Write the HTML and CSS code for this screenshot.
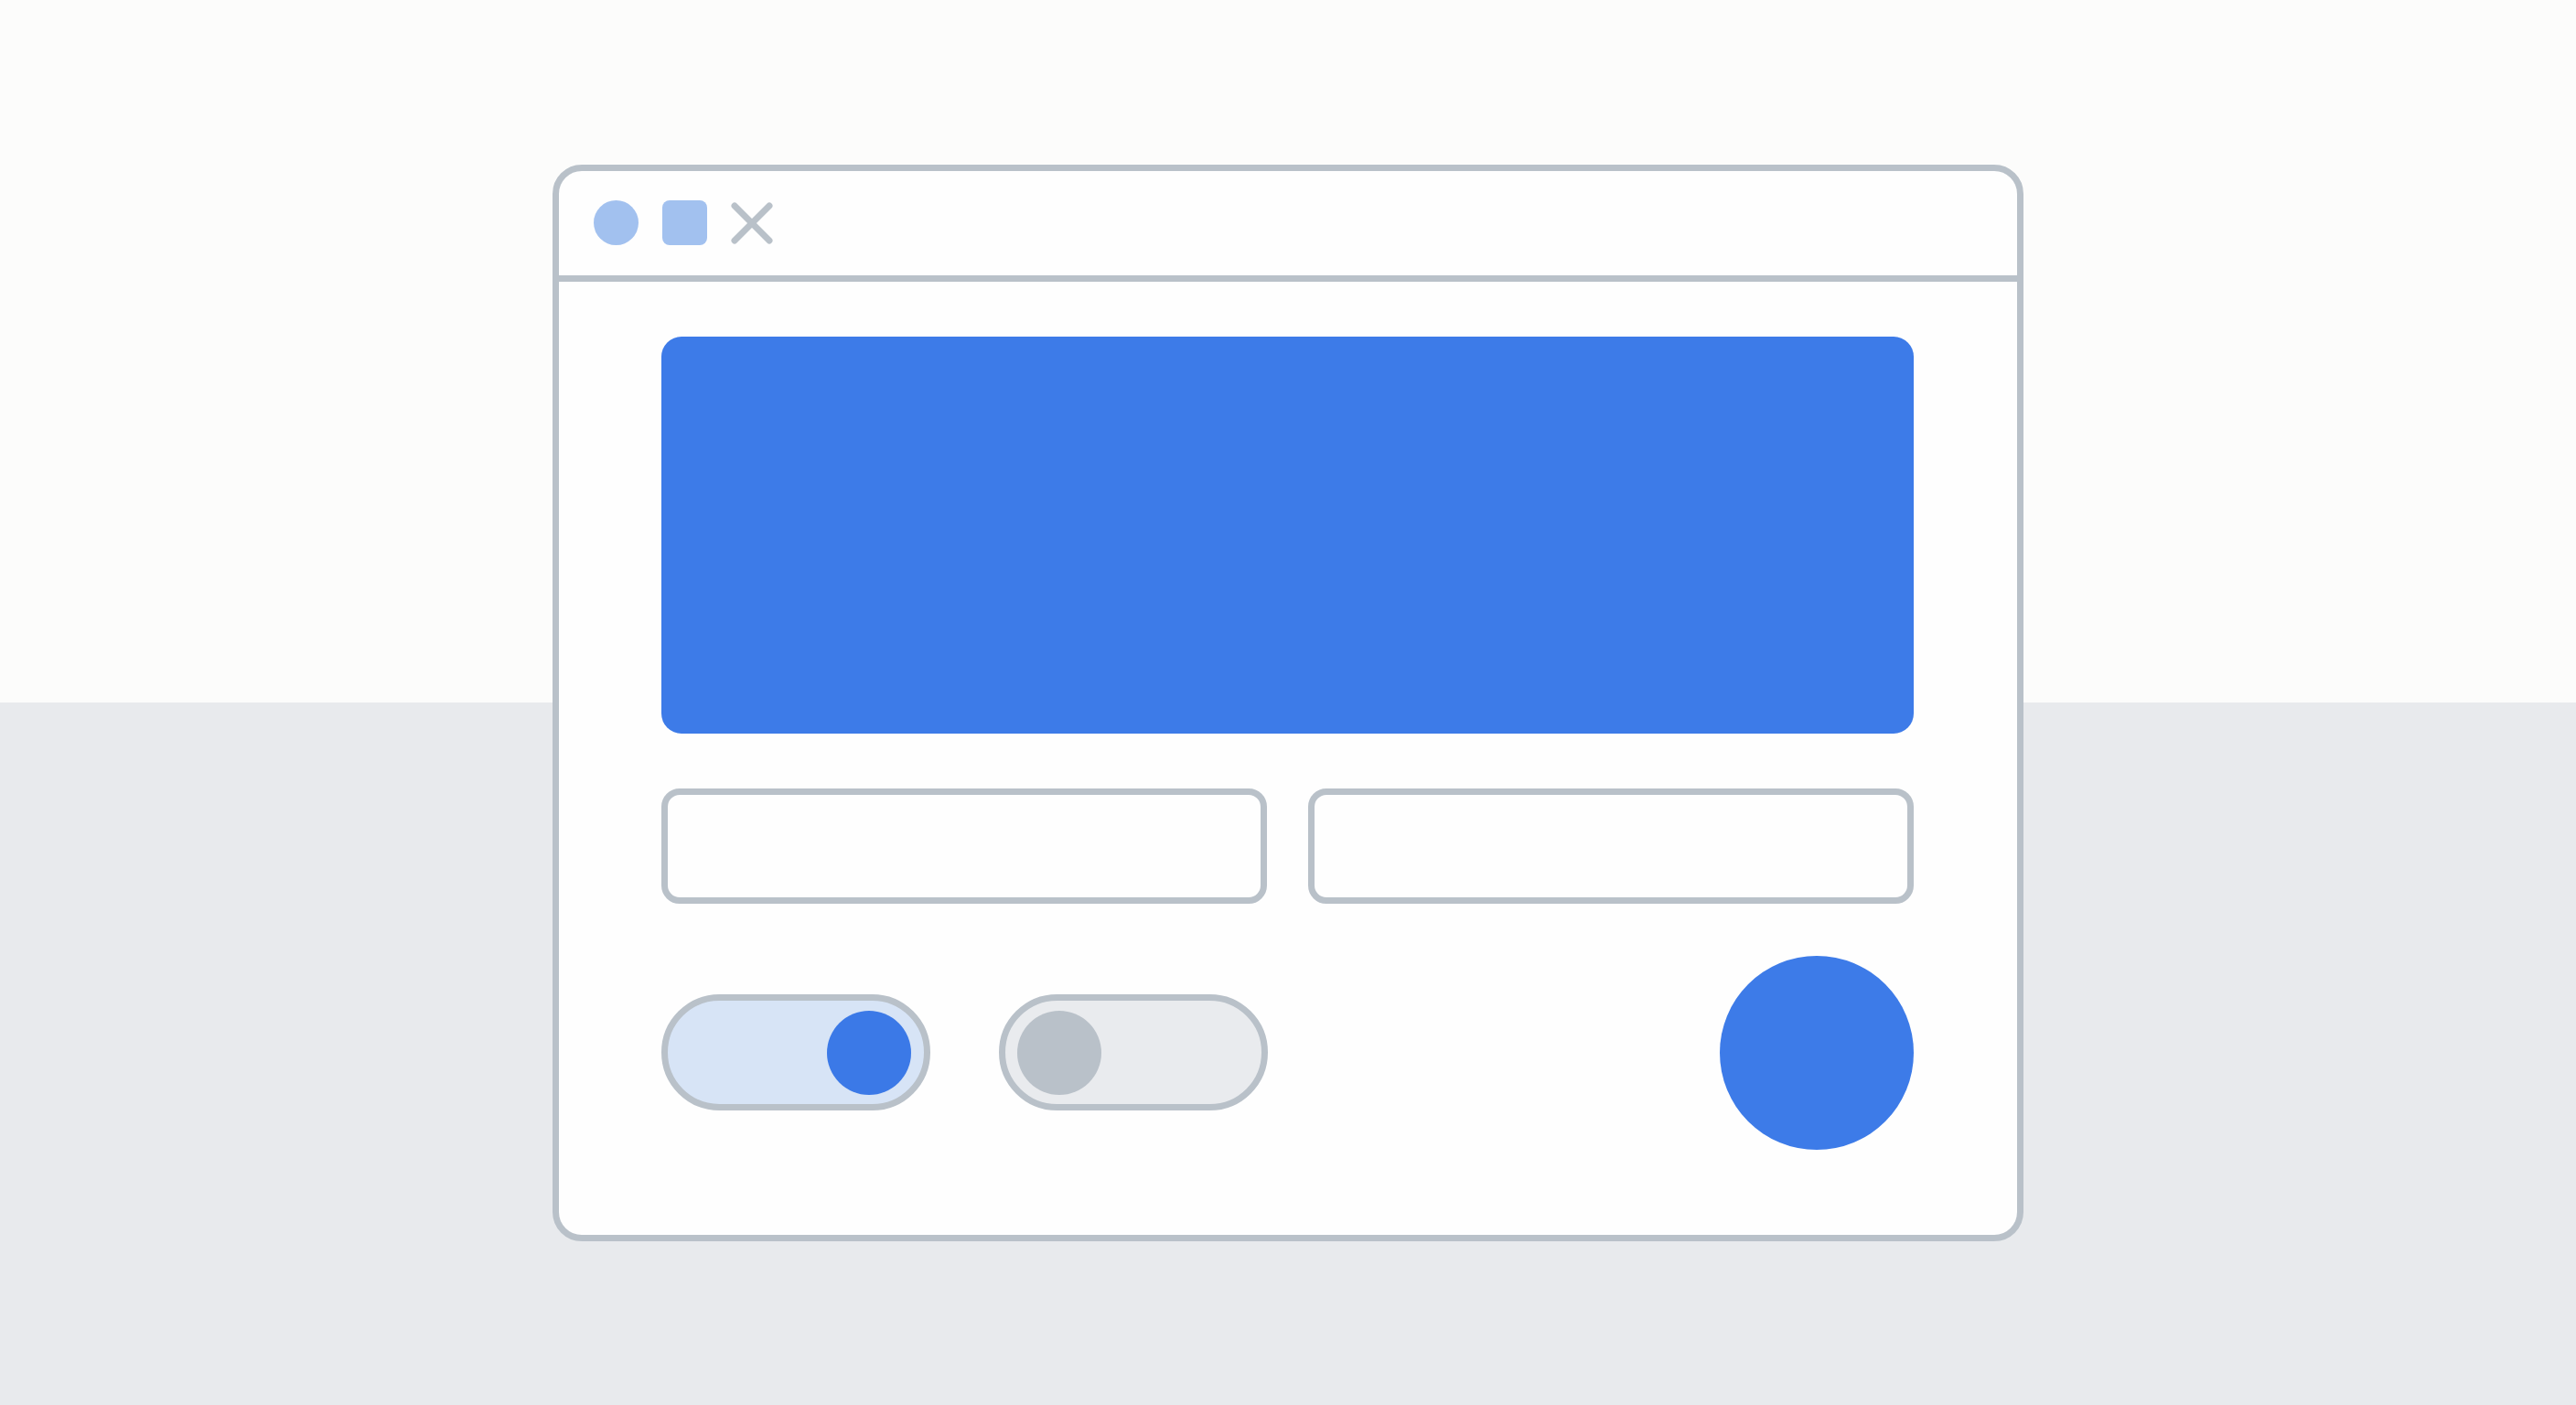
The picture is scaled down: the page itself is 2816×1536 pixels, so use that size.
FILE: index.html
```html
<!DOCTYPE html>
<html lang="en">

<head>
    <meta charset="UTF-8">
    <meta name="viewport" content="width=device-width, initial-scale=1.0">
    <title>Window Sketch</title>
    <link rel="stylesheet" href="styles.css">
</head>

<body>
    <div class="window">
        <div class="titlebar">
            <span class="dot"></span>
            <span class="square"></span>
            <svg class="close" width="46" height="46" viewBox="0 0 46 46">
                <line x1="4" y1="4" x2="42" y2="42" />
                <line x1="42" y1="4" x2="4" y2="42" />
            </svg>
        </div>

        <div class="content">
            <div class="banner"></div>

            <div class="fields">
                <div class="field"></div>
                <div class="field"></div>
            </div>

            <div class="controls">
                <div class="toggle on"><span class="knob"></span></div>
                <div class="toggle off"><span class="knob"></span></div>
                <div class="fab"></div>
            </div>
        </div>
    </div>
</body>

</html>
```

FILE: styles.css
```css
html,
body {
    height: 100%;
}

body {
    margin: 0;
    display: flex;
    align-items: center;
    justify-content: center;
    background: linear-gradient(to bottom, #fcfcfb 0, #fcfcfb 50%, #e8eaed 50%, #e8eaed 100%);
    font-family: "Liberation Sans", sans-serif;
}

.window {
    box-sizing: border-box;
    width: 1608px;
    height: 1177px;
    border: 7px solid #b9c1c9;
    border-radius: 32px;
    background: #fefefe;
    overflow: hidden;
}

.titlebar {
    height: 114px;
    border-bottom: 7px solid #b9c1c9;
    display: flex;
    align-items: center;
    padding-left: 38px;
    gap: 26px;
}

.dot {
    width: 49px;
    height: 49px;
    border-radius: 50%;
    background: #a2c1ef;
}

.square {
    width: 49px;
    height: 49px;
    border-radius: 8px;
    background: #a2c1ef;
}

.close line {
    stroke: #b9c1c9;
    stroke-width: 7;
    stroke-linecap: round;
}

.content {
    padding: 60px 113px 0 112px;
}

.banner {
    height: 434px;
    border-radius: 22px;
    background: #3d7be8;
}

.fields {
    display: grid;
    grid-template-columns: 1fr 1fr;
    gap: 45px;
    margin-top: 60px;
}

.field {
    box-sizing: border-box;
    height: 126px;
    border: 7px solid #b9c1c9;
    border-radius: 20px;
    background: #fefefe;
}

.controls {
    display: flex;
    align-items: center;
    margin-top: 57px;
    gap: 75px;
}

.toggle {
    box-sizing: border-box;
    width: 294px;
    height: 127px;
    border: 7px solid #b9c1c9;
    border-radius: 64px;
    display: flex;
    align-items: center;
}

.toggle.on {
    background: #d7e4f6;
    justify-content: flex-end;
    padding-right: 14px;
}

.toggle.off {
    background: #e9ebee;
    padding-left: 13px;
}

.knob {
    width: 92px;
    height: 92px;
    border-radius: 50%;
}

.on .knob {
    background: #3b79e7;
}

.off .knob {
    background: #b9c1c9;
}

.fab {
    width: 212px;
    height: 212px;
    margin-left: auto;
    border-radius: 50%;
    background: #3d7be8;
}
```
